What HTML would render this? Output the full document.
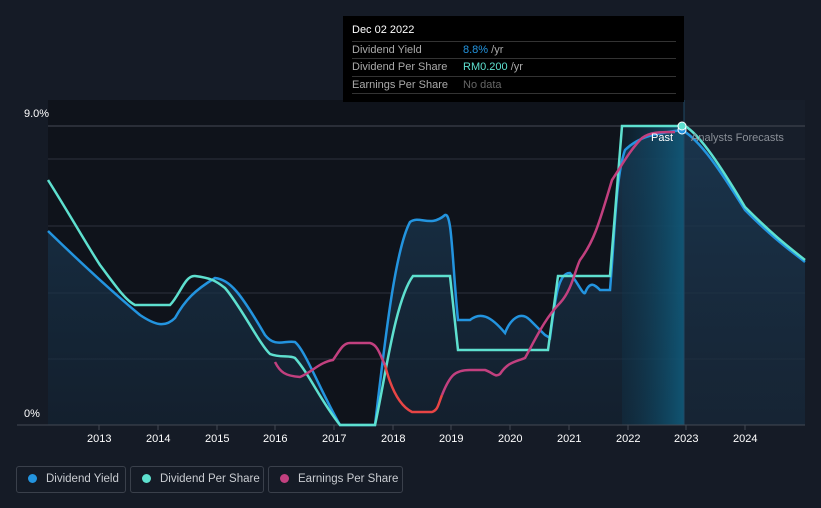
<!DOCTYPE html>
<html><head><style>
html,body{margin:0;width:821px;height:508px;overflow:hidden}
body{background:#151b26;font-family:"Liberation Sans",sans-serif;position:relative}
.t{position:absolute;color:#fff;font-size:11px;white-space:nowrap}
.leg{position:absolute;top:466px;height:27px;border:1px solid #3a404b;border-radius:3px;color:#c9ccd1;font-size:11.5px;line-height:25px;box-sizing:border-box;white-space:nowrap;overflow:hidden}
.leg i{display:inline-block;width:9px;height:9px;border-radius:50%;margin:0 9px 0 11px;vertical-align:-1px}
.tip{position:absolute;left:343px;top:16px;width:341px;height:86px;background:#000}
.row{position:absolute;left:9px;width:324px;border-top:1px solid #333;font-size:11px;color:#aaa;height:17px;line-height:17px;white-space:nowrap}
</style></head><body>
<svg width="821" height="508" style="position:absolute;left:0;top:0">
<defs>
<linearGradient id="g" x1="0" y1="0" x2="0" y2="1"><stop offset="0" stop-color="#1a3a55" stop-opacity=".8"/><stop offset="1" stop-color="#16283a" stop-opacity=".6"/></linearGradient>
<linearGradient id="p" x1="0" y1="0" x2="1" y2="0"><stop offset="0" stop-color="#0e3850" stop-opacity=".3"/><stop offset="1" stop-color="#105a7a" stop-opacity=".9"/></linearGradient>
</defs>
<rect x="48" y="100" width="636" height="325" fill="#0f131b"/>
<rect x="684" y="100" width="121" height="325" fill="#171e2a"/>
<g stroke="#2c323c" stroke-width="1">
<line x1="48" y1="126" x2="805" y2="126" stroke="#444a54"/>
<line x1="48" y1="159" x2="805" y2="159"/><line x1="48" y1="226" x2="805" y2="226"/>
<line x1="48" y1="293" x2="805" y2="293"/><line x1="48" y1="359" x2="805" y2="359"/>
</g>
<path d="M48,231 C80,262 110,290 140,315 C155,325 165,328 175,318 C185,300 195,290 215,278 C230,280 240,292 265,335 C275,348 285,340 295,342 C305,350 320,390 340,425 L375,425 C385,340 395,250 410,222 C420,215 430,228 445,215 C452,212 452,260 458,320 L470,320 C480,312 490,315 505,333 C510,320 520,310 530,320 L545,335 L550,338 C555,300 558,272 570,273 C578,283 583,295 585,293 C590,280 595,285 600,290 L610,290 C615,230 616,175 625,150 C640,135 660,133 682,130 C700,140 720,170 745,210 C775,240 790,250 805,262 L805,425 L48,425 Z" fill="url(#g)"/>
<rect x="622" y="126" width="62" height="299" fill="url(#p)"/>
<line x1="684" y1="100" x2="684" y2="425" stroke="#1f4a66"/>
<line x1="17" y1="425" x2="805" y2="425" stroke="#444a54"/>
<path d="M48,231 C80,262 110,290 140,315 C155,325 165,328 175,318 C185,300 195,290 215,278 C230,280 240,292 265,335 C275,348 285,340 295,342 C305,350 320,390 340,425 L375,425 C385,340 395,250 410,222 C420,215 430,228 445,215 C452,212 452,260 458,320 L470,320 C480,312 490,315 505,333 C510,320 520,310 530,320 L545,335 L550,338 C555,300 558,272 570,273 C578,283 583,295 585,293 C590,280 595,285 600,290 L610,290 C615,230 616,175 625,150 C640,135 660,133 682,130 C700,140 720,170 745,210 C775,240 790,250 805,262" fill="none" stroke="#2394df" stroke-width="2.5"/>
<path d="M48,180 C70,215 90,250 100,265 C115,285 125,300 135,305 L170,305 C180,295 185,275 195,276 C210,278 215,280 225,288 C240,305 260,345 270,354 C280,358 290,355 295,358 C310,375 320,400 340,425 L375,425 C385,380 395,300 413,276 L450,276 L458,350 L548,350 L558,276 L610,276 L622,126 L685,126 C700,135 720,165 745,207 C775,237 790,248 805,260" fill="none" stroke="#5ee0cf" stroke-width="2.5"/>
<path d="M275,362 C280,372 285,376 300,377 C312,372 320,362 333,360 C340,350 343,343 350,343 L370,343 C378,345 380,355 385,365" fill="none" stroke="#c2407f" stroke-width="2.5"/>
<path d="M385,365 C390,385 398,405 412,412 L432,412 C438,410 438,405 442,395" fill="none" stroke="#e84545" stroke-width="2.5"/>
<path d="M442,395 C450,375 455,370 470,370 L485,370 C492,372 495,378 500,374 C508,362 515,362 525,358 C535,340 545,318 560,303 C572,290 575,270 580,260 C595,240 600,220 612,180 C622,165 630,150 642,138 C650,132 660,132 675,132" fill="none" stroke="#c2407f" stroke-width="2.5"/>
<circle cx="682" cy="130" r="4" fill="#2394df" stroke="#fff" stroke-width="1"/>
<circle cx="682" cy="126" r="4" fill="#5ee0cf" stroke="#fff" stroke-width="1"/>
<g stroke="#444a54"><line x1="99" y1="425" x2="99" y2="430"/><line x1="158" y1="425" x2="158" y2="430"/><line x1="217" y1="425" x2="217" y2="430"/><line x1="275" y1="425" x2="275" y2="430"/><line x1="334" y1="425" x2="334" y2="430"/><line x1="393" y1="425" x2="393" y2="430"/><line x1="451" y1="425" x2="451" y2="430"/><line x1="510" y1="425" x2="510" y2="430"/><line x1="569" y1="425" x2="569" y2="430"/><line x1="628" y1="425" x2="628" y2="430"/><line x1="686" y1="425" x2="686" y2="430"/><line x1="745" y1="425" x2="745" y2="430"/></g>
</svg>
<div class="t" style="left:24px;top:108px">9.0%</div>
<div class="t" style="left:24px;top:408px">0%</div>
<div class="t" style="left:651px;top:132px">Past</div>
<div class="t" style="left:691px;top:132px;color:#8a8f97">Analysts Forecasts</div>
<div class="t" style="left:87px;top:433px">2013</div><div class="t" style="left:146px;top:433px">2014</div>
<div class="t" style="left:205px;top:433px">2015</div><div class="t" style="left:263px;top:433px">2016</div>
<div class="t" style="left:322px;top:433px">2017</div><div class="t" style="left:381px;top:433px">2018</div>
<div class="t" style="left:439px;top:433px">2019</div><div class="t" style="left:498px;top:433px">2020</div>
<div class="t" style="left:557px;top:433px">2021</div><div class="t" style="left:616px;top:433px">2022</div>
<div class="t" style="left:674px;top:433px">2023</div><div class="t" style="left:733px;top:433px">2024</div>
<div class="tip">
<div style="position:absolute;left:9px;top:8px;color:#fff;font-size:11px">Dec 02 2022</div>
<div class="row" style="top:25px">Dividend Yield<span style="position:absolute;left:111px;color:#2394df">8.8% <span style="color:#aaa">/yr</span></span></div>
<div class="row" style="top:42px">Dividend Per Share<span style="position:absolute;left:111px;color:#5ee0cf">RM0.200 <span style="color:#aaa">/yr</span></span></div>
<div class="row" style="top:60px">Earnings Per Share<span style="position:absolute;left:111px;color:#666">No data</span></div>
<div class="row" style="top:77px;height:0"></div>
</div>
<div class="leg" style="left:16px;width:110px"><i style="background:#2394df"></i>Dividend Yield</div>
<div class="leg" style="left:130px;width:134px"><i style="background:#5ee0cf"></i>Dividend Per Share</div>
<div class="leg" style="left:268px;width:135px"><i style="background:#c2407f"></i>Earnings Per Share</div>
</body></html>
